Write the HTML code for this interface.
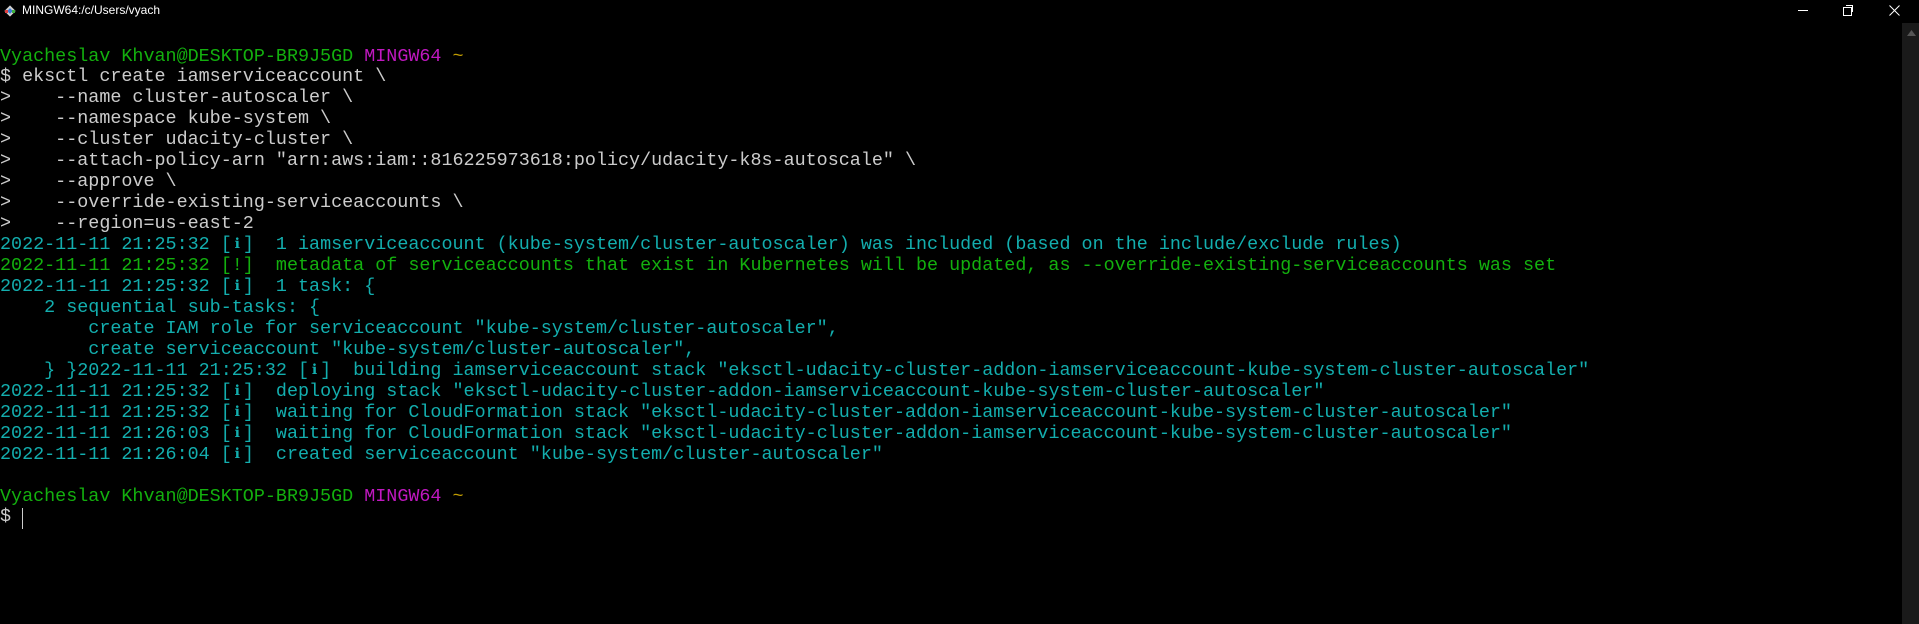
<!DOCTYPE html>
<html><head><meta charset="utf-8"><style>
html,body{margin:0;padding:0;background:#000;width:1919px;height:624px;overflow:hidden;position:relative}
.title{position:absolute;left:22px;top:3px;font:12px "Liberation Sans",sans-serif;color:#fff}
pre{position:absolute;left:0;top:46.5px;margin:0;font-family:"Liberation Mono",monospace;font-size:18.4px;line-height:20.95px;color:#cccccc}
.g{color:#13b00e}.m{color:#c018c0}.y{color:#c19c00}.c{color:#13aeae}
.i{display:inline-block;width:11.06px;text-align:center;font-size:14px;vertical-align:top}
.sb{position:absolute;left:1902px;top:23px;width:17px;height:601px;background:#1a1a1a}
.cur{position:absolute;left:22px;top:508px;width:1px;height:21px;background:#ccc}
</style></head><body>
<svg style="position:absolute;left:3px;top:4px" width="14" height="14" viewBox="0 0 14 14"><rect x="3" y="3" width="8" height="8" transform="rotate(45 7 7)" fill="#d0d0d0"/><rect x="5" y="5" width="4" height="4" transform="rotate(45 7 7)" fill="#3a7bd5"/><rect x="2" y="6" width="3" height="3" fill="#e04040"/><rect x="9" y="6" width="3" height="3" fill="#40b040"/></svg>
<div class="title">MINGW64:/c/Users/vyach</div>
<div style="position:absolute;left:1798px;top:10px;width:10px;height:1px;background:#fff"></div>
<div style="position:absolute;left:1843px;top:7px;width:7px;height:7px;border:1px solid #fff"></div>
<div style="position:absolute;left:1846px;top:5px;width:6px;height:6px;border-top:1px solid #fff;border-right:1px solid #fff"></div>
<svg style="position:absolute;left:1889px;top:5px" width="11" height="11"><path d="M0.5 0.5L10.5 10.5M10.5 0.5L0.5 10.5" stroke="#fff" stroke-width="1"/></svg>
<div class="sb"><svg style="position:absolute;left:5px;top:7px" width="9" height="6"><path d="M4.5 0L9 6H0Z" fill="#555"/></svg></div>
<pre><span class="g">Vyacheslav Khvan@DESKTOP-BR9J5GD</span> <span class="m">MINGW64</span> <span class="y">~</span>
$ eksctl create iamserviceaccount \
&gt;    --name cluster-autoscaler \
&gt;    --namespace kube-system \
&gt;    --cluster udacity-cluster \
&gt;    --attach-policy-arn "arn:aws:iam::816225973618:policy/udacity-k8s-autoscale" \
&gt;    --approve \
&gt;    --override-existing-serviceaccounts \
&gt;    --region=us-east-2
<span class="c">2022-11-11 21:25:32 [<span class="i">ℹ</span>]  1 iamserviceaccount (kube-system/cluster-autoscaler) was included (based on the include/exclude rules)</span>
<span class="g">2022-11-11 21:25:32 [!]  metadata of serviceaccounts that exist in Kubernetes will be updated, as --override-existing-serviceaccounts was set</span>
<span class="c">2022-11-11 21:25:32 [<span class="i">ℹ</span>]  1 task: {
    2 sequential sub-tasks: {
        create IAM role for serviceaccount "kube-system/cluster-autoscaler",
        create serviceaccount "kube-system/cluster-autoscaler",
    } }2022-11-11 21:25:32 [<span class="i">ℹ</span>]  building iamserviceaccount stack "eksctl-udacity-cluster-addon-iamserviceaccount-kube-system-cluster-autoscaler"
2022-11-11 21:25:32 [<span class="i">ℹ</span>]  deploying stack "eksctl-udacity-cluster-addon-iamserviceaccount-kube-system-cluster-autoscaler"
2022-11-11 21:25:32 [<span class="i">ℹ</span>]  waiting for CloudFormation stack "eksctl-udacity-cluster-addon-iamserviceaccount-kube-system-cluster-autoscaler"
2022-11-11 21:26:03 [<span class="i">ℹ</span>]  waiting for CloudFormation stack "eksctl-udacity-cluster-addon-iamserviceaccount-kube-system-cluster-autoscaler"
2022-11-11 21:26:04 [<span class="i">ℹ</span>]  created serviceaccount "kube-system/cluster-autoscaler"</span>

<span class="g">Vyacheslav Khvan@DESKTOP-BR9J5GD</span> <span class="m">MINGW64</span> <span class="y">~</span>
$</pre>
<div class="cur"></div>
</body></html>
